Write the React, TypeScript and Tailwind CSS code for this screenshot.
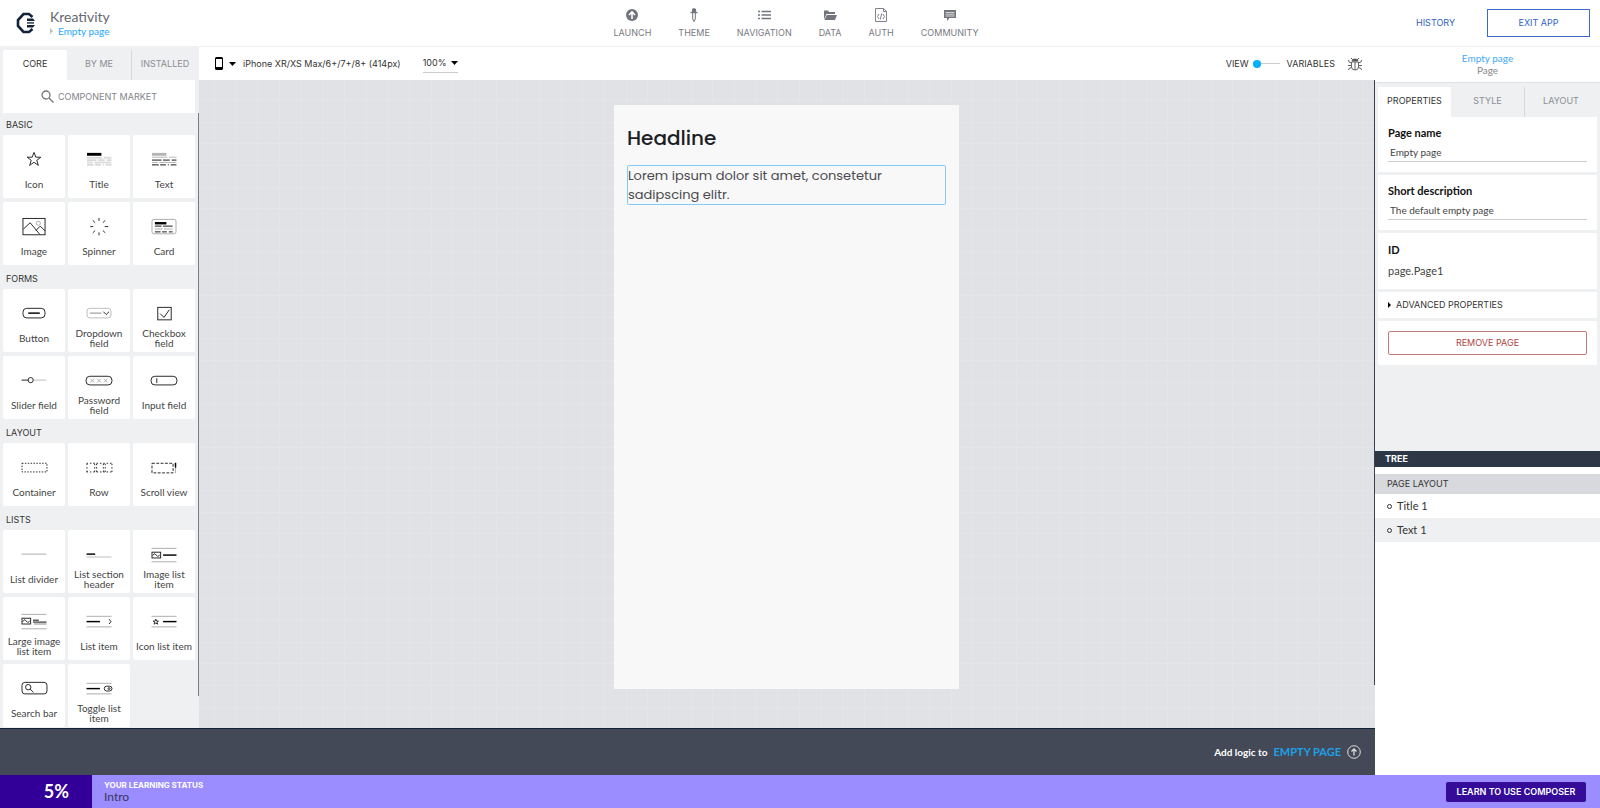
import React from 'react';

type Tile = { label: string; icon: React.ReactNode };
type Group = { title: string; tiles: Tile[] };

const Art: React.FC<{ children: React.ReactNode }> = ({ children }) => (
  <svg width="28" height="20" viewBox="0 0 28 20" fill="none" stroke="#222" strokeWidth="1" aria-hidden="true">
    {children}
  </svg>
);

const groups: Group[] = [
  {
    title: 'BASIC',
    tiles: [
      {
        label: 'Icon',
        icon: <Art><path d="M14 2.5l1.9 5h5.2l-4.2 3.2 1.6 5.3-4.5-3.2L9.5 16l1.6-5.3L6.9 7.5h5.2z" /></Art>,
      },
      {
        label: 'Title',
        icon: (
          <Art>
            <path d="M1.5 4.5h15" stroke="#000" strokeWidth="3" />
            <path d="M1.5 8h16M19 8h8M1.5 13h6M9 13h18" stroke="#ddd" strokeWidth="2" />
            <path d="M1.5 10.5h10M13 10.5h7M22 10.5h5M1.5 15.5h7M10 15.5h6M18 15.5h1M21 15.5h6" stroke="#bbb" />
          </Art>
        ),
      },
      {
        label: 'Text',
        icon: (
          <Art>
            <path d="M1.5 4.5h15" stroke="#b5b5b8" strokeWidth="3" />
            <path d="M1.5 7.5h16M19 7.5h8M1.5 13h6M9 13h18" stroke="#b5b5b8" />
            <path d="M1.5 10.5h10M13 10.5h7M22 10.5h5M1.5 15.5h7M10 15.5h6M18 15.5h1M21 15.5h6" stroke="#111" />
          </Art>
        ),
      },
      {
        label: 'Image',
        icon: (
          <Art>
            <rect x="2.5" y="1.5" width="23" height="17" />
            <circle cx="18.5" cy="6.5" r="2.2" stroke="#aaa" />
            <path d="M3 12.5l7-6.5 10 12M16 14l4.5-4.5 5 5" />
          </Art>
        ),
      },
      {
        label: 'Spinner',
        icon: <Art><path d="M14 1v3M14 16v3M5 10h3M20 10h3.5M7.5 3.5L10 6M20.5 3.5L18 6M7.5 16.5L10 14M20.5 16.5L18 14" /></Art>,
      },
      {
        label: 'Card',
        icon: (
          <Art>
            <rect x="1.5" y="2.5" width="25" height="15" rx="2" stroke="#aaa" />
            <path d="M4.5 6.5h12" stroke="#000" strokeWidth="2.5" />
            <path d="M4.5 9.5h7M13 9.5h10M4.5 15.5h6M12 15.5h5M19 15.5h4" stroke="#111" />
            <path d="M4.5 12.5h8M14 12.5h9" stroke="#aaa" />
          </Art>
        ),
      },
    ],
  },
  {
    title: 'FORMS',
    tiles: [
      {
        label: 'Button',
        icon: <Art><rect x="2.5" y="4.5" width="23" height="10" rx="4" /><path d="M8 9.5h12" stroke="#000" strokeWidth="1.5" /></Art>,
      },
      {
        label: 'Dropdown field',
        icon: <Art><rect x="1.5" y="4.5" width="25" height="10" rx="3" stroke="#bbb" /><path d="M4.5 9.5h12" stroke="#888" /><path d="M18.5 8l3 3 3-3" /></Art>,
      },
      {
        label: 'Checkbox field',
        icon: <Art><rect x="7.5" y="3.5" width="14" height="13" /><path d="M10 10l4 4 5.5-8" /></Art>,
      },
      {
        label: 'Slider field',
        icon: <Art><path d="M1 9.5h7" /><path d="M13 9.5h14" stroke="#bbb" /><circle cx="10.5" cy="9.5" r="2.7" /></Art>,
      },
      {
        label: 'Password field',
        icon: <Art><rect x=".5" y="5.5" width="27" height="9" rx="4" /><path d="M5 8l4 4m0-4l-4 4M12 8l4 4m0-4l-4 4M19 8l4 4m0-4l-4 4" stroke="#aaa" /></Art>,
      },
      {
        label: 'Input field',
        icon: <Art><rect x=".5" y="5.5" width="27" height="9" rx="4" /><path d="M6.5 7.5v5" /></Art>,
      },
    ],
  },
  {
    title: 'LAYOUT',
    tiles: [
      { label: 'Container', icon: <Art><rect x="1.5" y="5.5" width="26" height="9" strokeDasharray="1.5 1.5" /></Art> },
      {
        label: 'Row',
        icon: <Art><path d="M1 5.5h27M1 14.5h27M1.5 6v9M9.5 6v9M11.5 6v9M18.5 6v9M20.5 6v9M27.5 6v9" strokeDasharray="1.5 2" /></Art>,
      },
      {
        label: 'Scroll view',
        icon: <Art><rect x="1.5" y="5.5" width="22" height="10" strokeDasharray="3 1.5" /><path d="M26 5v11" stroke="#aaa" /><path d="M26 5v5" stroke="#000" strokeWidth="1.5" /></Art>,
      },
    ],
  },
  {
    title: 'LISTS',
    tiles: [
      { label: 'List divider', icon: <Art><path d="M1 9.5h26" stroke="#aaa" /></Art> },
      { label: 'List section header', icon: <Art><path d="M1 9.5h9" stroke="#000" strokeWidth="1.5" /><path d="M1 12.5h26" stroke="#bbb" /></Art> },
      {
        label: 'Image list item',
        icon: (
          <Art>
            <path d="M1 3.5h26M1 17.5h26" stroke="#aaa" />
            <rect x="1.5" y="7.5" width="9" height="6" /><path d="M2 11l2.5-2 3 3 2-1.5" />
            <path d="M13 10.5h14" stroke="#000" strokeWidth="1.5" />
          </Art>
        ),
      },
      {
        label: 'Large image list item',
        icon: (
          <Art>
            <path d="M1 2.5h26M1 17.5h26" stroke="#aaa" />
            <rect x="1.5" y="6.5" width="9" height="6" /><path d="M2 10l2.5-2 3 3 2-1.5" />
            <path d="M13 8.5h6M13 10.5h14" stroke="#000" /><path d="M14 12.5h13" stroke="#888" />
          </Art>
        ),
      },
      {
        label: 'List item',
        icon: <Art><path d="M1 4.5h26M1 15.5h26" stroke="#aaa" /><path d="M1 10h14" stroke="#000" strokeWidth="1.5" /><path d="M24.5 7.5l2 2.5-2 2.5" /></Art>,
      },
      {
        label: 'Icon list item',
        icon: (
          <Art>
            <path d="M1 4.5h26M1 15.5h26" stroke="#aaa" />
            <path d="M5.5 7.5l.8 2h2l-1.6 1.2.6 2-1.8-1.2-1.8 1.2.6-2L2.7 9.5h2z" />
            <path d="M13 10h14" stroke="#000" strokeWidth="1.5" />
          </Art>
        ),
      },
      {
        label: 'Search bar',
        icon: <Art><rect x="1.5" y="3.5" width="26" height="12" rx="3" /><circle cx="8" cy="8.5" r="2.8" /><path d="M10 10.5l3.5 3.5" /></Art>,
      },
      {
        label: 'Toggle list item',
        icon: (
          <Art>
            <path d="M1 4.5h26M1 15.5h26" stroke="#aaa" />
            <path d="M1 10h14" stroke="#000" strokeWidth="1.5" />
            <rect x="19.5" y="7.5" width="8" height="5" rx="2.5" /><circle cx="24.5" cy="10" r="1" />
          </Art>
        ),
      },
    ],
  },
];

const NavIcon: React.FC<{ children: React.ReactNode }> = ({ children }) => (
  <svg width="14" height="14" viewBox="0 0 14 14" fill="none" stroke="#72757d" aria-hidden="true">{children}</svg>
);

const navItems: Tile[] = [
  { label: 'LAUNCH', icon: <NavIcon><circle cx="7" cy="7" r="6" fill="#72757d" stroke="none" /><path d="M7 11V4M4 7l3-3 3 3" stroke="#fff" strokeWidth="1.6" /></NavIcon> },
  { label: 'THEME', icon: <NavIcon><path d="M5.5 1h3v3h-3zM7 0v1" fill="#72757d" /><path d="M3.5 4.5h7" strokeWidth="1.4" /><path d="M5.7 5v6L7 13.5 8.3 11V5" /></NavIcon> },
  { label: 'NAVIGATION', icon: <NavIcon><path d="M1 3.5h2M1 7h2M1 10.5h2M4.5 3.5H14M4.5 7H14M4.5 10.5H14" strokeWidth="1.4" /></NavIcon> },
  { label: 'DATA', icon: <NavIcon><path d="M1 11.5V2.5h4l1 1.5h6v2H3.5L1 11.5zM3.8 7H14l-2 5H1.5z" fill="#72757d" stroke="none" /></NavIcon> },
  { label: 'AUTH', icon: <NavIcon><path d="M1.5.5h8l3 3v10h-11zM9.5.5v3h3M5 6L3.5 8.5 5 11M9 6l1.5 2.5L9 11M7.7 5.5l-1.4 6" strokeWidth=".9" /></NavIcon> },
  { label: 'COMMUNITY', icon: <NavIcon><path d="M1 2h12v8H6.5L4 13v-3H1z" fill="#72757d" stroke="none" /><path d="M2.5 4.5h9M2.5 6.2h9M2.5 8h9" stroke="#fff" strokeWidth=".7" /></NavIcon> },
];

const Logo = () => (
  <svg className="shrink-0" width="20" height="22" viewBox="0 0 20 22" aria-hidden="true">
    <path d="M16.5 5L13 2H7.5L2 8v6l5.5 6H13l3.5-3" fill="none" stroke="#12233a" strokeWidth="2.6" />
    <path d="M11 6.5h6l2 2.5h-8z" fill="#12233a" />
    <path d="M11 10h7v1.800h-7z" fill="#4b5868" />
    <path d="M11 13h8l-2 2.5h-6z" fill="#12233a" />
  </svg>
);

const Header = () => (
  <header className="grid h-[47px] grid-cols-[1fr_auto_1fr] items-center border-b border-[#f1f1f3]">
    <div className="flex items-center gap-3.5 pl-4 font-[Lato,sans-serif]">
      <Logo />
      <div>
        <h1 className="text-sm leading-4 text-[#666870]">Kreativity</h1>
        <a href="#page" className="flex items-center gap-1 text-[10px] leading-3 text-[#1ea7fd]">
          <svg width="4" height="6" viewBox="0 0 4 6" aria-hidden="true"><path d="M0 0l3 3-3 3z" fill="#bbb" /></svg>
          Empty page
        </a>
      </div>
    </div>
    <nav className="flex gap-[27px] pr-2">
      {navItems.map(item => (
        <button key={item.label} className="flex flex-col items-center gap-[3px] pt-0.5 text-[9px] leading-4 text-[#777a82]">
          {item.icon}
          {item.label}
        </button>
      ))}
    </nav>
    <div className="flex items-center justify-end gap-8 pr-2.5 text-[9px] text-[#2f62c4]">
      <button>HISTORY</button>
      <button className="h-7 w-[103px] border border-[#3c6ac4]">EXIT APP</button>
    </div>
  </header>
);

const Sidebar = () => (
  <aside className="flex w-[199px] shrink-0 bg-[#eff0f2]">
    <div className="flex min-w-0 flex-1 flex-col pl-[3px]">
      <div className="flex h-[33px] pt-[3px] text-[9px] text-[#8b8d94]">
        <button className="w-16 rounded-t-xs bg-white pb-0.5 text-[#333]">CORE</button>
        <button className="w-16 pb-0.5">BY ME</button>
        <button className="flex-1 border-l border-[#d8d9dd] pb-0.5">INSTALLED</button>
      </div>
      <button className="mr-[3px] flex h-[33px] shrink-0 items-center justify-center gap-1 bg-white text-[9px] text-[#82858c]">
        <svg width="13" height="13" viewBox="0 0 13 13" fill="none" stroke="#777" strokeWidth="1.3" aria-hidden="true">
          <circle cx="5" cy="5" r="4" /><path d="M8 8l4.5 4.5" />
        </svg>
        COMPONENT MARKET
      </button>
      <div className="min-h-0 flex-1 overflow-hidden pt-0.5">
        {groups.map(group => (
          <section key={group.title} className="mb-1">
            <h2 className="h-5 pl-[3px] text-[9px] leading-5 text-[#333]">{group.title}</h2>
            <div className="grid grid-cols-[62px_62px_62px] gap-x-[3px] gap-y-1 font-[Lato,sans-serif]">
              {group.tiles.map(tile => (
                <button key={tile.label} className="flex h-[63px] flex-col items-center rounded-xs bg-white pt-[15px] text-[10px] leading-[10px] text-[#444]">
                  {tile.icon}
                  <span className="flex h-[30px] items-center justify-center px-0.5">{tile.label}</span>
                </button>
              ))}
            </div>
          </section>
        ))}
      </div>
    </div>
    <div className="mt-[66px] mb-8 w-px bg-[#777b85]" />
  </aside>
);

const Caret = () => (
  <svg width="7" height="4" viewBox="0 0 7 4" aria-hidden="true"><path d="M0 0h7L3.5 4z" fill="#000" /></svg>
);

const Toolbar = () => (
  <div className="flex h-[33px] shrink-0 items-center bg-white pr-3 pl-4 text-[9px] text-[#333]">
    <svg width="8" height="13" viewBox="0 0 8 13" aria-hidden="true">
      <path d="M1.5 0h5Q8 0 8 1.5v10Q8 13 6.5 13h-5Q0 13 0 11.5v-10Q0 0 1.5 0zM1 2v8h6V2z" fill="#000" fillRule="evenodd" />
    </svg>
    <button className="ml-1.5 flex items-center gap-[7px]"><Caret />iPhone XR/XS Max/6+/7+/8+ (414px)</button>
    <button className="ml-[22px] flex h-[18px] items-center gap-1 border-b border-[#ccc]">100%<Caret /></button>
    <div className="ml-auto flex items-center">
      <span>VIEW</span>
      <button role="switch" aria-checked="false" aria-label="View or variables" className="mr-[7px] ml-1 flex items-center">
        <span className="size-2 rounded-full bg-[#00b0ff]" />
        <span className="h-px w-[19px] bg-[#ccc]" />
      </button>
      <span>VARIABLES</span>
      <button aria-label="Debug" className="ml-3">
        <svg width="16" height="14" viewBox="0 0 16 14" fill="none" stroke="#666" aria-hidden="true">
          <path d="M5 4q0-2 3-2t3 2z" fill="#444" />
          <path d="M4.5 5h7v5q0 3-3.5 3t-3.5-3zM8 5v8M4 1l2 2M12 1l-2 2M4.5 6L2 5 1.5 3M11.5 6L14 5l.5-2M4.5 8.5H1M11.5 8.5H15M4.5 10.5L2 11.5 1.5 13M11.5 10.5l2.5 1 .5 1.5" />
        </svg>
      </button>
    </div>
  </div>
);

const Canvas = () => (
  <main className="flex min-w-0 flex-1 flex-col">
    <Toolbar />
    <div className="flex min-h-0 flex-1 bg-[#e1e2e6] bg-[linear-gradient(to_right,#e4e5e9_1px,transparent_1px_22px,#e4e5e9_22px_23px,transparent_23px_43px,#e4e5e9_43px_44px,transparent_44px),linear-gradient(to_bottom,#e4e5e9_1px,transparent_1px_22px,#e4e5e9_22px_23px,transparent_23px_43px,#e4e5e9_43px_44px,transparent_44px)] bg-[size:65px_65px] bg-position-[15px_20px]">
      <div className="flex flex-1 justify-center pt-[25px] pb-[39px]">
        <div className="w-[345px] bg-[#f8f8f8] px-[13px] pt-[18px] font-[Poppins,Inter,sans-serif]">
          <h2 className="text-xl leading-[30px] font-medium text-[#1d1f24]">Headline</h2>
          <p className="mt-3 rounded-xs border border-[#83cdf5] text-[13px] leading-[19px] text-[#4a4a4f]">
            Lorem ipsum dolor sit amet, consetetur sadipscing elitr.
          </p>
        </div>
      </div>
      <div className="mb-[43px] w-px bg-[#3a4250]" />
    </div>
  </main>
);

const Field: React.FC<{ id: string; label: string; value: string }> = ({ id, label, value }) => (
  <div className="h-[55px] bg-white px-2.5 pt-[9px] font-[Lato,sans-serif]">
    <label htmlFor={id} className="block text-[11px] leading-[14px] font-bold text-[#111]">{label}</label>
    <input id={id} defaultValue={value} className="mt-1 block h-[18px] w-full border-b border-[#ccc] px-0.5 pb-0.5 text-[10px] text-[#444] outline-none" />
  </div>
);

const Inspector = () => (
  <aside className="flex w-[225px] shrink-0 flex-col bg-white">
    <div className="h-9 shrink-0 border-b border-[#e0e1e4] pt-[5px] text-center font-[Lato,sans-serif] text-[10px] leading-3">
      <div className="text-[#3fa9f5]">Empty page</div>
      <div className="text-[#888]">Page</div>
    </div>
    <div className="h-[368px] shrink-0 bg-[#eff0f2] px-[3px]">
      <div className="flex h-[34px] pt-1 text-[9px] text-[#8b8d94]">
        <button className="w-[73px] bg-white pb-0.5 text-[#333]">PROPERTIES</button>
        <button className="w-[73px] pb-0.5">STYLE</button>
        <button className="flex-1 border-l border-[#d8d9dd] pb-0.5">LAYOUT</button>
      </div>
      <div className="flex flex-col gap-[3px]">
        <Field id="page-name" label="Page name" value="Empty page" />
        <Field id="page-description" label="Short description" value="The default empty page" />
        <div className="h-14 bg-white px-2.5 pt-2.5 font-[Lato,sans-serif] text-[#444]">
          <h3 className="text-[11px] leading-[14px] font-bold text-[#111]">ID</h3>
          <p className="mt-[7px] text-[11px] leading-[14px]">page.Page1</p>
        </div>
        <button className="flex h-[26px] items-center gap-1 bg-white px-2.5 text-[9px] text-[#333]">
          <svg width="4" height="6" viewBox="0 0 4 6" aria-hidden="true"><path d="M0 0l3 3-3 3z" fill="#000" /></svg>
          ADVANCED PROPERTIES
        </button>
        <div className="bg-white p-2.5">
          <button className="block h-6 w-full rounded-xs border border-[#c57a7a] text-[9px] text-[#ad4444]">REMOVE PAGE</button>
        </div>
      </div>
    </div>
    <div className="flex min-h-0 flex-1 flex-col text-[#333]">
      <h2 className="h-4 bg-[#2d3746] pl-2.5 text-[9px] leading-4 font-bold text-white">TREE</h2>
      <h3 className="mt-[7px] h-5 bg-[#d8d9dd] pl-3 text-[9px] leading-5">PAGE LAYOUT</h3>
      <ul className="font-[Lato,sans-serif] text-[11px] leading-6">
        {['Title 1', 'Text 1'].map(name => (
          <li key={name} className="flex items-center gap-[5px] pl-3 even:bg-[#eff0f2]">
            <span className="size-[5px] rounded-full border border-[#333]" />
            {name}
          </li>
        ))}
      </ul>
    </div>
  </aside>
);

const App = () => (
  <div className="flex h-screen flex-col overflow-hidden bg-white font-[Inter,'Open_Sans',sans-serif]">
    <Header />
    <div className="flex min-h-0 flex-1">
      <div className="flex min-w-0 flex-1 flex-col">
        <div className="flex min-h-0 flex-1">
          <Sidebar />
          <Canvas />
        </div>
        <div className="flex h-[47px] shrink-0 items-center justify-end gap-1.5 border-t border-[#14233a] bg-[#434957] pr-3.5 font-[Lato,sans-serif] text-[10px] font-bold text-white">
          Add logic to
          <a href="#logic" className="text-[11px] text-[#1ea0e6]">EMPTY PAGE</a>
          <svg width="14" height="14" viewBox="0 0 14 14" fill="none" stroke="#ddd" aria-hidden="true">
            <circle cx="7" cy="7" r="6.3" /><path d="M7 10.5V4M4.5 6.5L7 4l2.5 2.5" strokeWidth="1.3" />
          </svg>
        </div>
      </div>
      <Inspector />
    </div>
    <footer className="flex h-[33px] shrink-0 items-center bg-[#9b8cff]">
      <div className="flex h-full w-[92px] items-center justify-end bg-[#320099] pr-[23px] pb-0.5 font-[Lato,sans-serif] text-lg font-bold text-white">5%</div>
      <div className="ml-3">
        <div className="text-[8px] leading-[10px] font-bold text-white">YOUR LEARNING STATUS</div>
        <div className="font-[Lato,sans-serif] text-xs leading-[14px] text-[#3a3560]">Intro</div>
      </div>
      <button className="mr-3.5 ml-auto h-5 w-[140px] rounded-xs bg-[#340c99] text-[9px] font-semibold text-white">LEARN TO USE COMPOSER</button>
    </footer>
  </div>
);

export default App;
